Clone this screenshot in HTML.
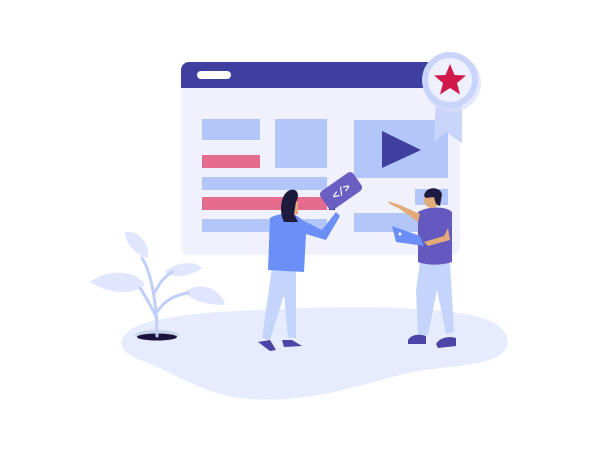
<!DOCTYPE html>
<html><head><meta charset="utf-8"><style>html,body{margin:0;padding:0;background:#fff}svg{display:block}</style></head>
<body>
<svg width="600" height="450" viewBox="0 0 600 450" xmlns="http://www.w3.org/2000/svg">
<path d="M125 335 C135 318 200 312 260 310 C330 306 420 305 470 315 C510 322 515 345 500 355 C480 368 440 365 400 375 C350 388 300 405 240 398 C200 393 170 370 140 360 C120 352 118 343 125 335 Z" fill="#e6ecfd"/>
<rect x="181" y="62" width="279" height="193" rx="8" fill="#f0f1fd"/>
<path d="M189 62 H452 a8 8 0 0 1 8 8 V88 H181 V70 a8 8 0 0 1 8 -8Z" fill="#3f3fa0"/>
<rect x="197" y="71" width="34" height="8" rx="4" fill="#fff"/>
<g fill="#b3c6f9">
<rect x="202" y="119" width="58" height="21"/>
<rect x="275" y="119" width="52" height="49"/>
<rect x="354" y="120" width="94" height="58"/>
<rect x="202" y="177" width="125" height="13"/>
<rect x="202" y="219" width="125" height="13"/>
<rect x="415" y="189" width="33" height="16"/>
<rect x="354" y="213" width="94" height="19"/>
</g>
<rect x="202" y="155" width="58" height="13" fill="#e56b8f"/>
<rect x="202" y="197" width="125" height="13" fill="#e56b8f"/>
<path d="M382 131 L421 150 L382 168Z" fill="#3f3fa0"/>
<path d="M436 100 L434 142 L446 132 L462 143 L462 100Z" fill="#c9d4fb"/>
<circle cx="452" cy="83" r="29" fill="#d9defa" opacity=".7"/>
<circle cx="450" cy="80" r="28" fill="#c9d4fb"/>
<circle cx="450" cy="80" r="22" fill="#eef1fd"/>
<path d="M450 64 L454.5 75 L466 75.5 L457 83 L460 94.5 L450 88 L440 94.5 L443 83 L434 75.5 L445.5 75Z" fill="#d0184a"/>
<ellipse cx="157" cy="335" rx="22" ry="5" fill="#c9d6ea"/>
<ellipse cx="157" cy="337" rx="20" ry="3.5" fill="#1c1240"/>
<g fill="#dfe6fd">
<path d="M125 232 C140 230 150 245 148 258 C138 256 125 245 125 232Z"/>
<path d="M90 282 C105 270 135 268 145 285 C130 297 105 292 90 282Z"/>
<path d="M165 272 C175 262 195 260 202 268 C190 276 175 280 165 272Z"/>
<path d="M185 292 C195 282 220 285 225 305 C210 305 192 302 185 292Z"/>
</g>
<g stroke="#c0cff9" stroke-width="3" fill="none" stroke-linecap="round">
<path d="M157 336 C157 300 150 270 142 258"/>
<path d="M157 318 C150 305 145 295 140 288"/>
<path d="M155 292 C160 282 165 276 172 272"/>
<path d="M157 312 C165 300 175 295 188 293"/>
</g>
<!-- woman -->
<path d="M272 268 L296 268 L296 338 L288 338 L284 295 L270 340 L262 338 Z" fill="#c4d4fa"/>
<path d="M258 342 L270 340 L276 350 L270 351 Z" fill="#4b45a8"/>
<path d="M282 340 L292 340 L302 346 L284 347 Z" fill="#4b45a8"/>
<path d="M270 218 C280 212 296 212 302 220 L322 230 L336 212 L340 216 L326 240 L306 234 L304 272 L268 270 Z" fill="#6b8ff7"/>
<path d="M292 200 L298 202 L298 214 L292 216Z" fill="#e3aa7a"/>
<path d="M290 190 C298 188 300 196 296 202 L294 214 L298 222 L284 222 C279 212 280 194 290 190Z" fill="#1d1a3e"/>
<rect x="329" y="206" width="6" height="4" fill="#1d1a3e"/>
<g transform="translate(341 191) rotate(-35)">
<rect x="-20" y="-11" width="40" height="22" rx="4" fill="#6a5ec2"/>
<text x="0" y="4" font-family="Liberation Mono, monospace" font-size="11" fill="#fff" text-anchor="middle" font-weight="bold">&lt;/&gt;</text>
</g>
<!-- man -->
<path d="M420 262 L450 262 L454 332 L446 334 L437 290 L428 335 L418 335 L416 290 Z" fill="#c4d4fa"/>
<path d="M408 340 C412 334 420 334 426 336 L426 344 L408 344Z" fill="#4b45a8"/>
<path d="M436 344 C440 337 450 336 456 338 L456 346 L438 348Z" fill="#4b45a8"/>
<path d="M418 212 C428 206 446 206 452 212 L452 262 C440 266 426 265 418 262 Z" fill="#6559c0"/>
<path d="M420 214 L400 205 L388 201 L390 204 L400 209 L418 222Z" fill="#e3aa7a"/>
<path d="M392 226 L420 236 L424 246 L396 242 Z" fill="#6b8ff7"/>
<circle cx="400" cy="234" r="1.5" fill="#fff"/>
<path d="M448 228 L450 240 L428 246 L424 242 L444 236Z" fill="#e3aa7a"/>
<circle cx="432" cy="200" r="8" fill="#e3aa7a"/>
<path d="M424 196 C425 186 440 186 442 194 L440 206 L436 204 L434 197 L426 198Z" fill="#1d1a3e"/>
</svg>
</body></html>
